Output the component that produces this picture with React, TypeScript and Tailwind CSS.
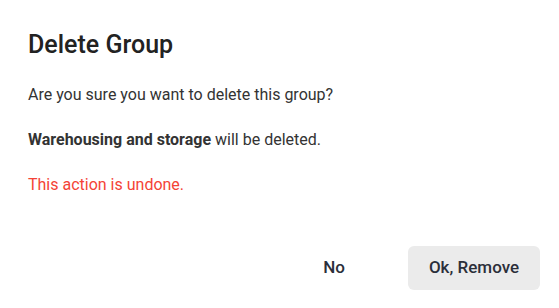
export default function App() {
    return (
        <div className="flex h-[308px] w-[559px] flex-col bg-white font-['Roboto',sans-serif]">
            {/* Header */}
            <h2 className="px-7 pt-[30px] text-[25px] font-medium leading-[30px] text-[#222]">Delete Group</h2>

            {/* Body */}
            <div className="flex flex-col gap-[21px] px-7 pt-[23px] text-[16px] leading-[24px] text-[#333]">
                <p>Are you sure you want to delete this group?</p>
                <p>
                    <span className="font-bold">Warehousing and storage</span> will be deleted.
                </p>
                <p className="text-[#f44336]">This action is undone.</p>
            </div>

            {/* Actions */}
            <div className="mt-auto flex items-center justify-end gap-[43px] px-[19px] pb-[18px]">
                <button className="h-11 rounded px-5 text-[17px] font-medium text-[#2b2f3a]">No</button>
                <button className="h-11 w-[132px] rounded-md bg-[#ebebeb] text-[17px] font-medium text-[#2b2f3a]">
                    Ok, Remove
                </button>
            </div>
        </div>
    );
}
